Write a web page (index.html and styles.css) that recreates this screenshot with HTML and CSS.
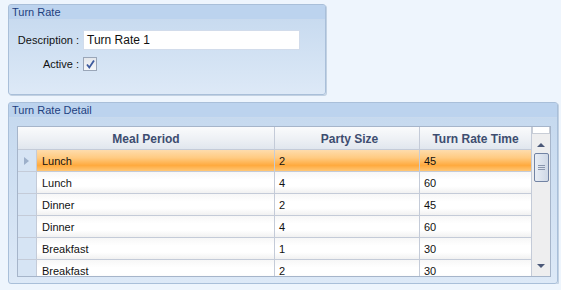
FILE: index.html
```html
<!DOCTYPE html>
<html lang="en">
<head>
    <meta charset="UTF-8">
    <title>Turn Rate</title>
    <link rel="stylesheet" href="styles.css">
</head>
<body>
    <!-- Turn Rate -->
    <div class="group group-top">
        <div class="group-title">Turn Rate</div>
        <div class="group-body form">
            <div class="field">
                <label class="label">Description :</label>
                <div class="textbox">Turn Rate 1</div>
            </div>
            <div class="field field-check">
                <label class="label">Active :</label>
                <span class="checkbox">
                    <svg width="11" height="11" viewBox="0 0 11 11">
                        <path d="M2 5.5 L4.3 8.5 L9 1.5" fill="none" stroke="#3d5a9e" stroke-width="1.8"/>
                    </svg>
                </span>
            </div>
        </div>
    </div>

    <!-- Turn Rate Detail -->
    <div class="group group-bottom">
        <div class="group-title">Turn Rate Detail</div>
        <div class="group-body">
            <div class="grid">
                <div class="grid-rows">
                    <div class="row head">
                        <div class="cell head-cell head-first">Meal Period</div>
                        <div class="cell head-cell">Party Size</div>
                        <div class="cell head-cell">Turn Rate Time</div>
                    </div>
                    <div class="row selected">
                        <div class="cell indicator"><span class="arrow"></span></div>
                        <div class="cell">Lunch</div>
                        <div class="cell">2</div>
                        <div class="cell">45</div>
                    </div>
                    <div class="row">
                        <div class="cell indicator"></div>
                        <div class="cell">Lunch</div>
                        <div class="cell">4</div>
                        <div class="cell">60</div>
                    </div>
                    <div class="row">
                        <div class="cell indicator"></div>
                        <div class="cell">Dinner</div>
                        <div class="cell">2</div>
                        <div class="cell">45</div>
                    </div>
                    <div class="row">
                        <div class="cell indicator"></div>
                        <div class="cell">Dinner</div>
                        <div class="cell">4</div>
                        <div class="cell">60</div>
                    </div>
                    <div class="row">
                        <div class="cell indicator"></div>
                        <div class="cell">Breakfast</div>
                        <div class="cell">1</div>
                        <div class="cell">30</div>
                    </div>
                    <div class="row">
                        <div class="cell indicator"></div>
                        <div class="cell">Breakfast</div>
                        <div class="cell">2</div>
                        <div class="cell">30</div>
                    </div>
                </div>
                <div class="scrollbar">
                    <div class="scroll-cap"></div>
                    <div class="scroll-up"></div>
                    <div class="scroll-thumb">
                        <span></span><span></span><span></span>
                    </div>
                    <div class="scroll-track"></div>
                    <div class="scroll-down"></div>
                </div>
            </div>
        </div>
    </div>
</body>
</html>
```

FILE: styles.css
```css
* {
    margin: 0;
    padding: 0;
    box-sizing: border-box;
}

body {
    font-family: 'Liberation Sans', Arial, sans-serif;
    font-size: 11px;
    background: #eef5fd;
    color: #111;
    overflow: hidden;
}

/* group boxes */
.group {
    margin-left: 8px;
    border: 1px solid #a9bfd9;
    border-radius: 3px;
    background: linear-gradient(#c4d8ee, #dde9f7);
    box-shadow: 1px 1px 0 #c2d1e2;
    display: flex;
    flex-direction: column;
    overflow: hidden;
}

.group-top {
    margin-top: 4px;
    width: 318px;
    height: 91px;
}

.group-bottom {
    margin-top: 7px;
    width: 550px;
    height: 182px;
}

.group-title {
    height: 15px;
    line-height: 15px;
    padding-left: 3px;
    background: #bcd3ee;
    color: #1e3f7e;
    border-bottom: 1px solid #c9daee;
}

.group-body {
    flex: 1;
}

.group-bottom .group-body {
    padding: 8px 0 0 8px;
}

/* form */
.form {
    padding-top: 10px;
    display: flex;
    flex-direction: column;
    gap: 7px;
}

.field {
    display: flex;
    align-items: center;
    gap: 4px;
}

.label {
    width: 70px;
    text-align: right;
    color: #111;
}

.textbox {
    width: 217px;
    height: 20px;
    line-height: 18px;
    padding-left: 3px;
    background: #fff;
    border: 1px solid #d2dceb;
    font-size: 12px;
}

.checkbox {
    width: 14px;
    height: 14px;
    border: 1px solid #9aa6b8;
    background: linear-gradient(#e4e7ec, #f6f7f9);
    display: flex;
    align-items: center;
    justify-content: center;
}

/* grid */
.grid {
    display: flex;
    width: 534px;
    height: 151px;
    border: 1px solid #a6b5ca;
    background: #fff;
    overflow: hidden;
}

.grid-rows {
    display: flex;
    flex-direction: column;
    width: 514px;
    overflow: hidden;
}

.row {
    display: grid;
    grid-template-columns: 19px 238px 145px 112px;
    flex: 0 0 22px;
    height: 22px;
    background: linear-gradient(#f7f7f7, #ffffff 35%, #ffffff 65%, #efefef);
}

.cell {
    border-right: 1px solid #c4cbd8;
    border-bottom: 1px solid #c4cbd8;
    padding-left: 4px;
    line-height: 22px;
    white-space: nowrap;
    overflow: hidden;
}

.row .cell:nth-child(2) {
    padding-left: 5px;
}

.indicator {
    background: #d6e4f4;
    padding: 0;
    display: flex;
    align-items: center;
    justify-content: center;
}

.arrow {
    width: 0;
    height: 0;
    border-top: 4px solid transparent;
    border-bottom: 4px solid transparent;
    border-left: 5px solid #9db0ca;
    margin-right: 2px;
}

.row.selected {
    background: linear-gradient(#fedcac, #ffcb82 35%, #ffaa3e 70%, #ffcc80);
}

.row.selected .indicator {
    background: #d6e4f4;
}

.row.head {
    grid-template-columns: 257px 145px 112px;
    flex: 0 0 23px;
    height: 23px;
    background: linear-gradient(#fafbfc, #eef1f5 50%, #dfe5ed);
}

.head-cell {
    padding: 0;
    text-align: center;
    font-size: 12px;
    font-weight: bold;
    color: #3d4d70;
    line-height: 24px;
}

/* scrollbar */
.scrollbar {
    width: 18px;
    display: flex;
    flex-direction: column;
    align-items: center;
    background: #eeeeef;
}

.scroll-cap {
    width: 18px;
    height: 7px;
    background: #fff;
    border: 1px solid #c8cdd6;
    border-top: 0;
}

.scroll-up {
    margin-top: 9px;
    width: 0;
    height: 0;
    border-left: 4px solid transparent;
    border-right: 4px solid transparent;
    border-bottom: 4px solid #4b5878;
}

.scroll-thumb {
    margin-top: 6px;
    width: 15px;
    height: 29px;
    border: 1px solid #7283a3;
    border-radius: 2px;
    background: linear-gradient(to right, #e8edf5, #cfd8e6);
    display: flex;
    flex-direction: column;
    align-items: center;
    justify-content: center;
    gap: 1px;
}

.scroll-thumb span {
    width: 7px;
    height: 1px;
    background: #8a96ad;
}

.scroll-track {
    flex: 1;
}

.scroll-down {
    margin-bottom: 8px;
    width: 0;
    height: 0;
    border-left: 4px solid transparent;
    border-right: 4px solid transparent;
    border-top: 4px solid #4b5878;
}
```
